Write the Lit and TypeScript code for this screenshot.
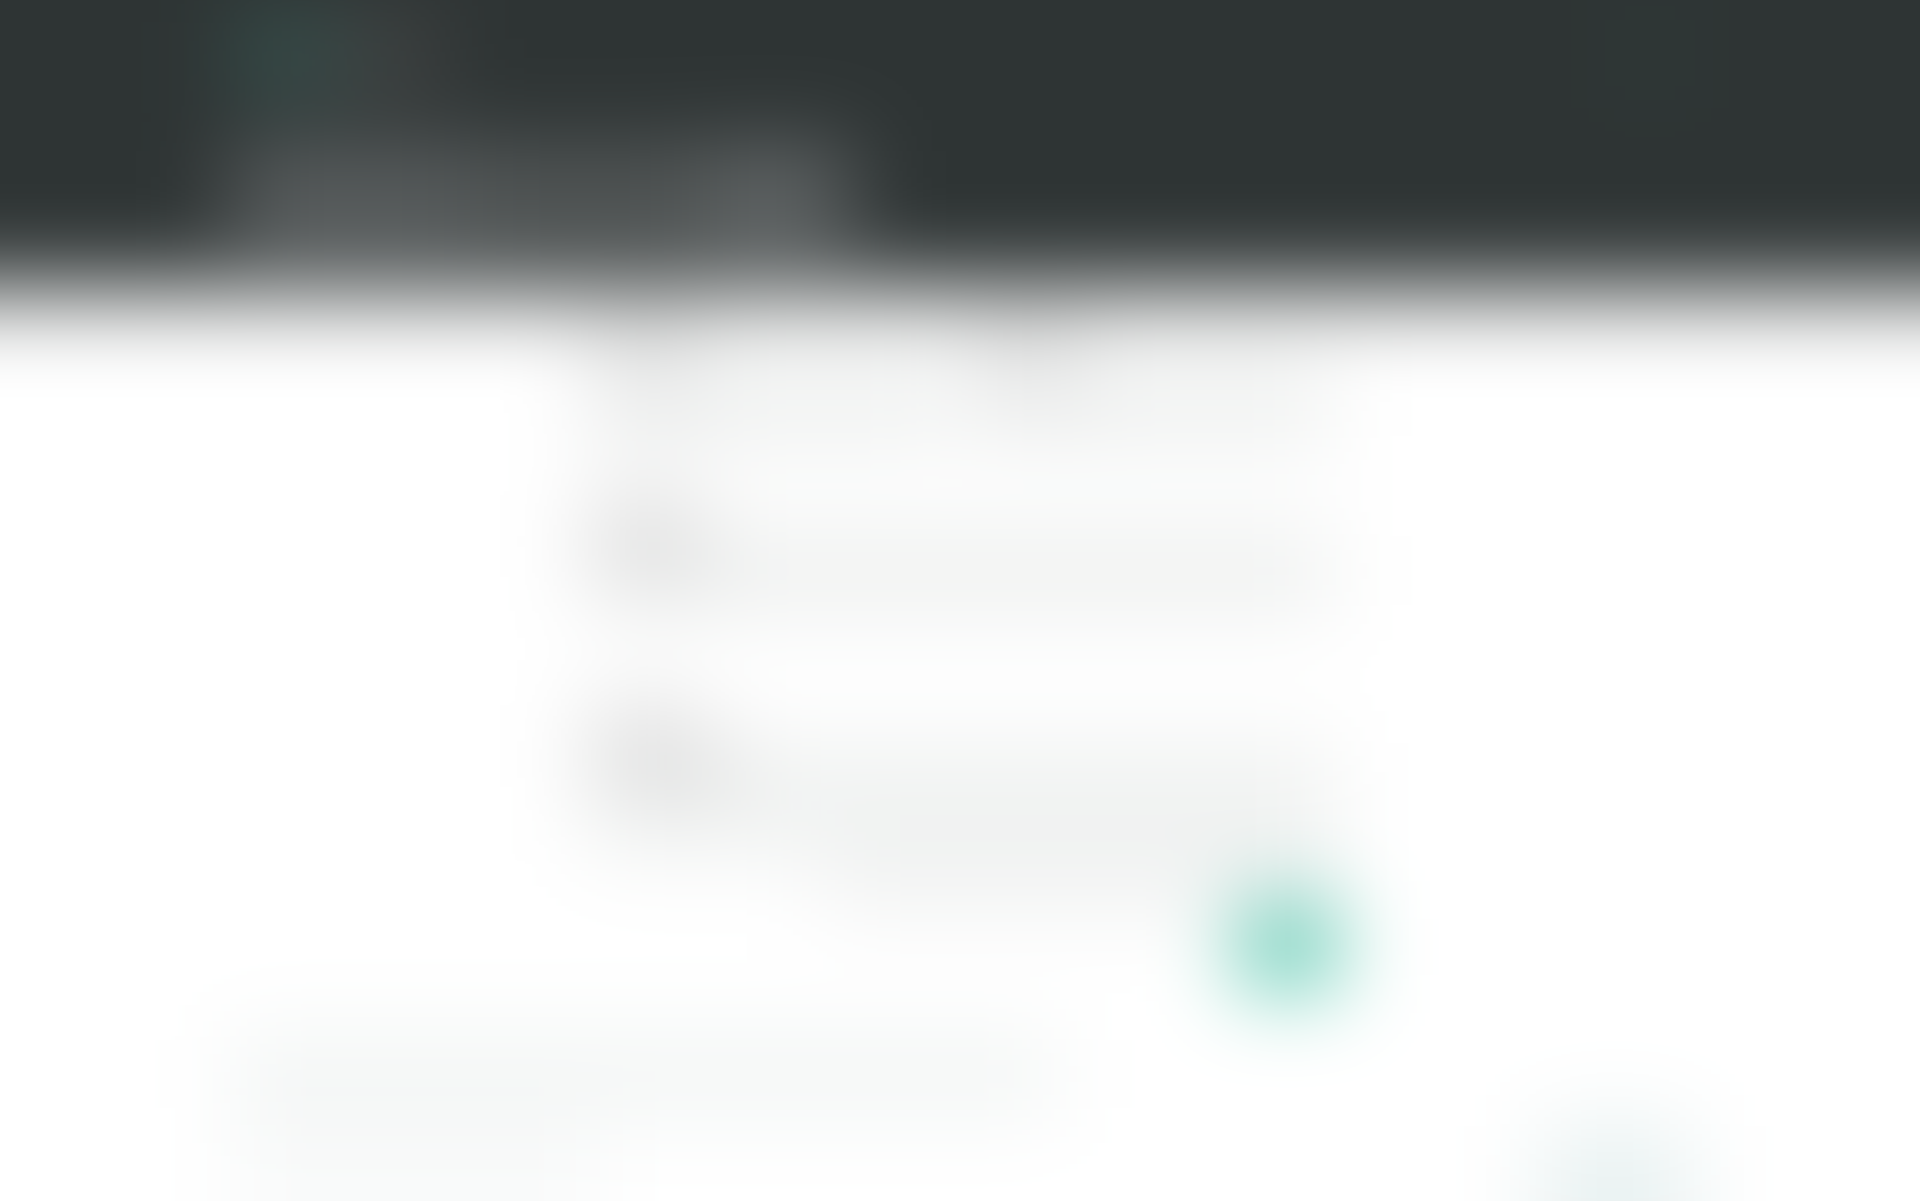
import { LitElement, html, css } from "lit";
import { customElement } from "lit/decorators.js";

@customElement("app-root")
export class AppRoot extends LitElement {
  static styles = css`
    :host {
      display: block;
      min-height: 100vh;
      overflow: hidden;
      background: #ffffff;
    }
    /* The layer bleeds past the window so its blurred rim is never seen. */
    .layer {
      margin: -160px;
      background: #ffffff;
      filter: blur(45px);
    }
    .wrap {
      max-width: 1460px;
      margin: 0 auto;
      display: flex;
    }
    header {
      display: flex;
      flex-direction: column;
      gap: 60px;
      padding: 176px 160px 46px;
      background: #2e3434;
    }
    .bar {
      width: 100%;
      height: 74px;
      align-items: center;
    }
    .mark {
      width: 110px;
      height: 74px;
      background: #38534f;
    }
    .brand {
      width: 100px;
      height: 56px;
      background: #4a4b4b;
    }
    .action {
      width: 80px;
      height: 56px;
      margin-left: auto;
      background: #303c39;
    }
    .title {
      width: 100%;
      height: 95px;
    }
    .word {
      width: 240px;
      background: #606465;
    }
    .word.dim {
      background: #575b5b;
    }
    .word.short {
      width: 140px;
      background: #686c6d;
    }
    main {
      max-width: 745px;
      margin: 0 auto;
      padding: 30px 0 50px;
      display: flex;
      flex-direction: column;
    }
    .pair {
      display: grid;
      grid-template-columns: 1fr 1fr;
      gap: 24px;
      margin-bottom: 50px;
    }
    .label {
      width: 110px;
      height: 40px;
      background: #e0e0e0;
    }
    .field {
      height: 80px;
      background: #edefee;
    }
    .value {
      width: 120px;
      height: 50px;
      background: #dcdcdc;
    }
    .pair .value {
      background: #e7e8e8;
    }
    .single {
      margin-bottom: 90px;
    }
    .single.last {
      margin-bottom: 0;
    }
    .last .field {
      height: 115px;
      background: #f0f2f1;
    }
    .last .value {
      width: 150px;
    }
    .note {
      width: 510px;
      height: 54px;
      align-self: flex-end;
      background: #f0f1f1;
    }
    .submit {
      width: 90px;
      height: 74px;
      align-self: flex-end;
      background: #36bc9f;
    }
    footer {
      padding: 0 160px;
    }
    .copy {
      flex: 1;
      display: flex;
      flex-direction: column;
    }
    .line {
      width: 830px;
      height: 80px;
      background: #f2f5f4;
    }
    .line.partial {
      width: 370px;
      height: 280px;
      background: #f9fafa;
    }
    .badge {
      width: 150px;
      height: 260px;
      margin-top: 90px;
      background: #e8f1f1;
    }
  `;

  private field(extra = "") {
    return html`
      <div class=${extra}>
        <div class="label"></div>
        <div class="field"><div class="value"></div></div>
      </div>
    `;
  }

  render() {
    return html`
      <div class="layer">
        <header>
          <div class="wrap bar">
            <div class="mark"></div>
            <div class="brand"></div>
            <div class="action"></div>
          </div>
          <div class="wrap title">
            <div class="word"></div>
            <div class="word dim"></div>
            <div class="word short"></div>
          </div>
        </header>
        <main>
          <div class="pair">${this.field()}${this.field()}</div>
          ${this.field("single")}
          ${this.field("single last")}
          <div class="note"></div>
          <div class="submit"></div>
        </main>
        <footer>
          <div class="wrap">
            <div class="copy">
              <div class="line"></div>
              <div class="line partial"></div>
            </div>
            <div class="badge"></div>
          </div>
        </footer>
      </div>
    `;
  }
}
